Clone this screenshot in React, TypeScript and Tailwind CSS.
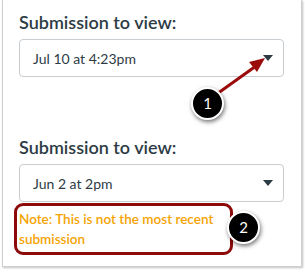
import React from "react";

function Caret() {
  return (
    <svg width="10" height="6" viewBox="0 0 10 6" className="flex-shrink-0">
      <path d="M0 0 L10 0 L5 6 Z" fill="#2d3b45" />
    </svg>
  );
}

function Select({ value }: { value: string }) {
  return (
    <div className="flex items-center justify-between h-[38px] border border-[#c7cdd1] rounded-[4px] pl-[13px] pr-[10px] bg-white">
      <span className="text-[14px] text-[#2d3b45]">{value}</span>
      <Caret />
    </div>
  );
}

function Badge({ n }: { n: number }) {
  return (
    <div className="w-[33px] h-[33px] rounded-full bg-black border-2 border-white shadow-[1px_2px_4px_rgba(0,0,0,0.55)] flex items-center justify-center text-white text-[15px]">
      {n}
    </div>
  );
}

export default function App() {
  return (
    <div
      className="relative w-[305px] h-[272px] bg-white overflow-hidden"
      style={{ fontFamily: "Lato, 'Liberation Sans', sans-serif" }}
    >
      {/* Panel */}
      <div className="ml-[2px] w-[300px] h-[267px] border-x border-b border-[#cfcfcf] shadow-[1px_1px_2px_rgba(0,0,0,0.25)] pl-[16px] pr-[17px] pt-[10px]">
        <p className="text-[18px] font-semibold text-[#2d3b45] leading-[24px]">Submission to view:</p>
        <div className="mt-[5px]">
          <Select value="Jul 10 at 4:23pm" />
        </div>

        <p className="mt-[58px] text-[18px] font-semibold text-[#2d3b45] leading-[24px]">Submission to view:</p>
        <div className="mt-[5px]">
          <Select value="Jun 2 at 2pm" />
        </div>

        <div className="-ml-[5px] mt-[1px] w-[219px] border-[3px] border-[#8c0a0a] rounded-[9px] pl-[2px] pr-0 py-[3px]">
          <p className="text-[13.5px] font-semibold text-[#f5a300] leading-[20px] whitespace-nowrap">
            Note: This is not the most recent
            <br />
            submission
          </p>
        </div>
      </div>

      {/* Annotation 1 arrow */}
      <svg className="absolute left-0 top-0" width="305" height="272" viewBox="0 0 305 272">
        <line x1="214" y1="96" x2="256" y2="66" stroke="#9b0b0b" strokeWidth="3" />
        <path d="M265 58 L249 62 L257 72 Z" fill="#9b0b0b" />
      </svg>

      <div className="absolute left-[191px] top-[87px]">
        <Badge n={1} />
      </div>
      <div className="absolute left-[227px] top-[211px]">
        <Badge n={2} />
      </div>
    </div>
  );
}
